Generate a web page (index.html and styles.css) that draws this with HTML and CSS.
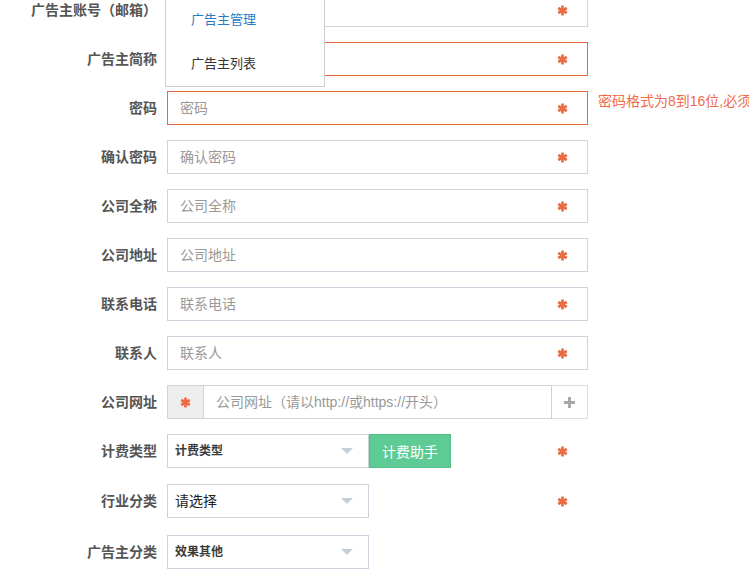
FILE: index.html
```html
<!DOCTYPE html>
<html lang="zh">
<head>
<meta charset="utf-8">
<title>广告主</title>
<link rel="stylesheet" href="styles.css">
</head>
<body>
<svg width="0" height="0" class="defs">
  <defs>
    <g id="ast">
      <path d="M5.5 0.5V10.5M1.2 3L9.8 8M1.2 8L9.8 3" stroke="#ec6b43" stroke-width="2.7" fill="none"/>
    </g>
  </defs>
</svg>
<div class="form">
  <div class="row">
    <label class="lbl">广告主账号（邮箱）</label>
    <div class="box"><input placeholder="广告主账号（邮箱）"><svg class="star" viewBox="0 0 11 11"><use href="#ast"/></svg></div>
  </div>
  <div class="row">
    <label class="lbl">广告主简称</label>
    <div class="box err"><input placeholder="广告主简称"><svg class="star" viewBox="0 0 11 11"><use href="#ast"/></svg></div>
  </div>
  <div class="row">
    <label class="lbl">密码</label>
    <div class="box err"><input placeholder="密码"><svg class="star" viewBox="0 0 11 11"><use href="#ast"/></svg></div>
    <span class="msg">密码格式为8到16位,必须</span>
  </div>
  <div class="row">
    <label class="lbl">确认密码</label>
    <div class="box"><input placeholder="确认密码"><svg class="star" viewBox="0 0 11 11"><use href="#ast"/></svg></div>
  </div>
  <div class="row">
    <label class="lbl">公司全称</label>
    <div class="box"><input placeholder="公司全称"><svg class="star" viewBox="0 0 11 11"><use href="#ast"/></svg></div>
  </div>
  <div class="row">
    <label class="lbl">公司地址</label>
    <div class="box"><input placeholder="公司地址"><svg class="star" viewBox="0 0 11 11"><use href="#ast"/></svg></div>
  </div>
  <div class="row">
    <label class="lbl">联系电话</label>
    <div class="box"><input placeholder="联系电话"><svg class="star" viewBox="0 0 11 11"><use href="#ast"/></svg></div>
  </div>
  <div class="row">
    <label class="lbl">联系人</label>
    <div class="box"><input placeholder="联系人"><svg class="star" viewBox="0 0 11 11"><use href="#ast"/></svg></div>
  </div>
  <div class="row">
    <label class="lbl">公司网址</label>
    <div class="group">
      <span class="addon"><svg class="star-s" viewBox="0 0 11 11"><use href="#ast"/></svg></span>
      <input class="gin" placeholder="公司网址（请以http://或https://开头）">
      <span class="plus"><svg viewBox="0 0 11 11" width="11" height="11"><path d="M5.5 0V11M0 5.5H11" stroke="#a8a8a8" stroke-width="3"/></svg></span>
    </div>
  </div>
  <div class="row r10">
    <label class="lbl">计费类型</label>
    <div class="sel"><span class="sv small">计费类型</span><span class="arrow"></span></div>
    <span class="btn">计费助手</span>
    <svg class="star out" viewBox="0 0 11 11"><use href="#ast"/></svg>
  </div>
  <div class="row r11">
    <label class="lbl">行业分类</label>
    <div class="sel"><span class="sv">请选择</span><span class="arrow"></span></div>
    <svg class="star out2" viewBox="0 0 11 11"><use href="#ast"/></svg>
  </div>
  <div class="row">
    <label class="lbl">广告主分类</label>
    <div class="sel"><span class="sv small">效果其他</span><span class="arrow"></span></div>
  </div>
</div>
<div class="menu">
  <div class="item active">广告主管理</div>
  <div class="item">广告主列表</div>
</div>
</body>
</html>
```
FILE: styles.css
```css
html, body {
  margin: 0;
  padding: 0;
  background: #fff;
  overflow: hidden;
}
body {
  font-family: "Liberation Sans", "Noto Sans CJK SC", sans-serif;
  font-size: 14px;
  color: #333;
  position: relative;
  width: 749px;
  height: 576px;
}
.defs {
  position: absolute;
}
.form {
  margin-top: -7px;
}
.row {
  display: flex;
  align-items: center;
  height: 34px;
  margin-bottom: 15px;
}
.r10 {
  margin-bottom: 16px;
}
.r11 {
  margin-bottom: 17px;
}
.lbl {
  width: 157px;
  flex: none;
  text-align: right;
  margin-right: 10px;
  font-weight: bold;
  color: #555;
  white-space: nowrap;
  line-height: 20px;
}
.box {
  width: 421px;
  height: 34px;
  flex: none;
  box-sizing: border-box;
  border: 1px solid #ccd5de;
  display: flex;
  align-items: center;
}
.box.err {
  border-color: #e9693e;
}
.box input, .gin {
  flex: 1;
  min-width: 0;
  border: 0;
  outline: 0;
  padding: 0 0 0 12px;
  margin: 0;
  font: inherit;
  height: 100%;
  background: transparent;
  color: #333;
}
input::placeholder {
  color: #999;
  opacity: 1;
}
.star {
  width: 11px;
  height: 11px;
  margin-right: 19px;
  flex: none;
  display: block;
}
.msg {
  color: #f06a4b;
  margin-left: 10px;
  align-self: flex-start;
  line-height: 20px;
  white-space: nowrap;
}
.group {
  display: flex;
  width: 421px;
  height: 34px;
  flex: none;
}
.addon {
  width: 37px;
  flex: none;
  box-sizing: border-box;
  border: 1px solid #ccd5de;
  background: #eee;
  display: flex;
  align-items: center;
  justify-content: center;
}
.star-s {
  width: 11px;
  height: 11px;
  display: block;
}
.gin {
  box-sizing: border-box;
  border: 1px solid #ccd5de;
  border-left: 0;
}
.plus {
  width: 36px;
  flex: none;
  box-sizing: border-box;
  border: 1px solid #dddddd;
  border-left: 0;
  display: flex;
  align-items: center;
  justify-content: center;
}
.sel {
  width: 202px;
  height: 34px;
  flex: none;
  box-sizing: border-box;
  border: 1px solid #ccd5de;
  display: flex;
  align-items: center;
  justify-content: space-between;
  padding-left: 7px;
}
.sv {
  color: #222;
  line-height: 20px;
}
.sv.small {
  font-size: 12px;
  font-weight: bold;
  color: #3a3a3a;
}
.arrow {
  width: 0;
  height: 0;
  border-top: 6px solid #c6ced7;
  border-left: 6px solid transparent;
  border-right: 6px solid transparent;
  margin-right: 15px;
}
.btn {
  width: 82px;
  height: 34px;
  flex: none;
  box-sizing: border-box;
  background: #5ecb94;
  border: 1px solid #4fc189;
  color: #fff;
  display: flex;
  align-items: center;
  justify-content: center;
}
.star.out {
  margin-left: 106px;
}
.star.out2 {
  margin-left: 188px;
}
.menu {
  position: absolute;
  left: 165px;
  top: -2px;
  width: 160px;
  box-sizing: border-box;
  border: 1px solid #cccccc;
  border-top: 0;
  background: #fff;
  font-size: 13px;
}
.item {
  height: 44px;
  line-height: 44px;
  padding-left: 25px;
  color: #333;
}
.item.active {
  color: #2a7bc2;
}
```
